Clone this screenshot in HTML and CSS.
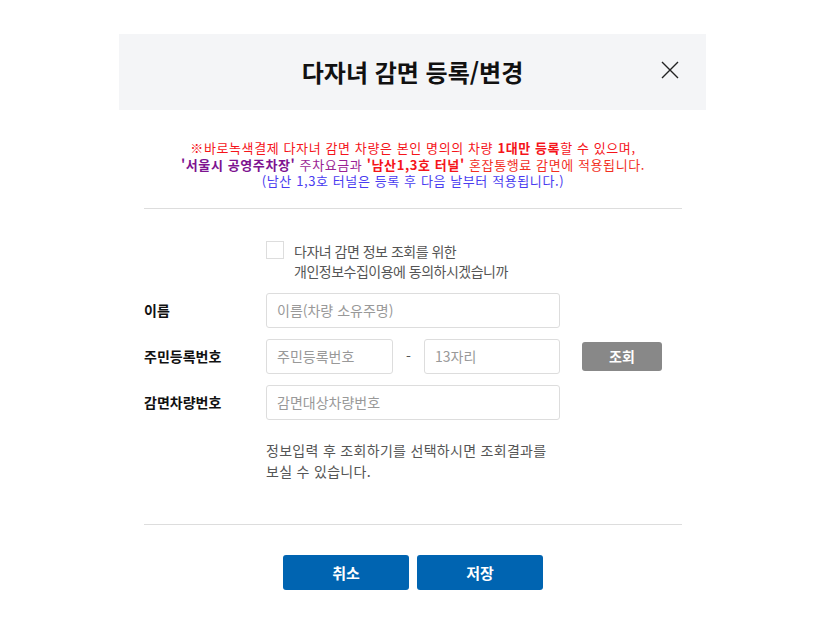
FILE: index.html
```html
<!DOCTYPE html>
<html lang="ko">
<head>
    <meta charset="UTF-8">
    <title>다자녀 감면 등록/변경</title>
    <link rel="stylesheet" href="styles.css">
</head>
<body>
<div class="modal">
    <div class="modal-head">
        <h1 class="modal-title">다자녀 감면 등록/변경</h1>
        <button class="close" type="button">
            <svg width="18" height="18" viewBox="0 0 18 18"><path d="M1 1L17 17M17 1L1 17" stroke="#222" stroke-width="1.4" fill="none"/></svg>
        </button>
    </div>
    <div class="modal-body">
        <p class="notice">
            <span class="red">※바로녹색결제 다자녀 감면 차량은 본인 명의의 차량 <b>1대만 등록</b>할 수 있으며,</span><br>
            <b class="purple">'서울시 공영주차장'</b> <span class="mag">주차요금과</span> <b class="red">'남산1,3호 터널'</b> <span class="orange">혼잡통행료 감면에 적용됩니다.</span><br>
            <span class="blue">(남산 1,3호 터널은 등록 후 다음 날부터 적용됩니다.)</span>
        </p>
        <hr class="line">
        <div class="form">
            <div></div>
            <label class="agree">
                <span class="check"></span>
                <span>다자녀 감면 정보 조회를 위한<br>개인정보수집이용에 동의하시겠습니까</span>
            </label>

            <div class="label">이름</div>
            <div class="field"><input class="input wide" type="text" placeholder="이름(차량 소유주명)"></div>

            <div class="label">주민등록번호</div>
            <div class="field">
                <input class="input jumin1" type="text" placeholder="주민등록번호">
                <span class="dash">-</span>
                <input class="input jumin2" type="text" placeholder="13자리">
                <button class="search" type="button">조회</button>
            </div>

            <div class="label">감면차량번호</div>
            <div class="field"><input class="input wide" type="text" placeholder="감면대상차량번호"></div>

            <div></div>
            <p class="guide">정보입력 후 조회하기를 선택하시면 조회결과를<br>보실 수 있습니다.</p>
        </div>
        <hr class="line bottom">
        <div class="buttons">
            <button class="btn" type="button">취소</button>
            <button class="btn" type="button">저장</button>
        </div>
    </div>
</div>
</body>
</html>
```

FILE: styles.css
```css
body{
    margin: 0;
    background: #fff;
    font-family: "Noto Sans CJK KR", "Noto Sans", sans-serif;
    color: #222;
}
.modal{
    width: 587px;
    margin: 34px auto 0;
    background: #fff;
}
.modal-head{
    position: relative;
    height: 76px;
    background: #f4f5f7;
    display: flex;
    align-items: center;
    justify-content: center;
}
.modal-title{
    margin: 0;
    font-size: 24px;
    font-weight: bold;
    line-height: 30px;
    color: #111;
}
.close{
    position: absolute;
    right: 27px;
    top: 27px;
    width: 18px;
    height: 18px;
    padding: 0;
    border: 0;
    background: none;
}
.close svg{
    display: block;
}
.modal-body{
    padding: 30px 24px 30px 25px;
}
.notice{
    margin: 0;
    text-align: center;
    font-size: 13px;
    line-height: 16.5px;
    letter-spacing: 0.6px;
}
.red{ color: #f5141a; }
.purple{ color: #7d1390; }
.mag{ color: #9a1f95; }
.orange{ color: #f2301f; }
.blue{ color: #4a3cf0; }
.line{
    border: 0;
    border-top: 1px solid #ddd;
    margin: 18px 0 0;
}
.form{
    display: grid;
    grid-template-columns: 122px 1fr;
    row-gap: 11px;
    margin-top: 32px;
}
.agree{
    display: flex;
    gap: 10px;
    font-size: 14px;
    line-height: 20px;
    color: #555;
    margin-bottom: 1px;
    letter-spacing: -0.5px;
}
.check{
    width: 16px;
    height: 16px;
    border: 1px solid #ddd;
    flex: none;
}
.label{
    font-size: 14px;
    font-weight: bold;
    color: #111;
    display: flex;
    align-items: center;
    height: 35px;
}
.field{
    display: flex;
    align-items: center;
    height: 35px;
}
.input{
    box-sizing: border-box;
    height: 35px;
    border: 1px solid #ddd;
    border-radius: 3px;
    padding: 0 10px;
    font-family: inherit;
    font-size: 14px;
    color: #333;
}
.input::placeholder{
    color: #999;
}
.wide{ width: 294px; }
.jumin1{ width: 127px; }
.jumin2{ width: 136px; }
.dash{
    width: 31px;
    text-align: center;
    font-size: 14px;
    color: #555;
}
.search{
    margin-left: 22px;
    width: 80px;
    height: 29px;
    border: 0;
    border-radius: 3px;
    background: #888;
    color: #fff;
    font-family: inherit;
    font-size: 14px;
    font-weight: bold;
}
.guide{
    margin: 9px 0 0;
    font-size: 14px;
    line-height: 21px;
    color: #555;
    letter-spacing: 0.3px;
}
.bottom{
    margin-top: 42px;
}
.buttons{
    display: flex;
    justify-content: center;
    gap: 8px;
    margin-top: 30px;
}
.btn{
    width: 126px;
    height: 35px;
    border: 0;
    border-radius: 3px;
    background: #0064b1;
    color: #fff;
    font-family: inherit;
    font-size: 15px;
    font-weight: bold;
}
```
